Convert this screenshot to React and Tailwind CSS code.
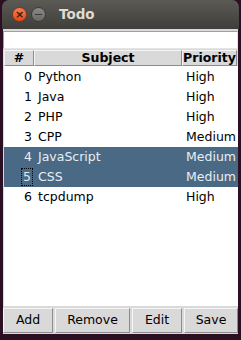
import React from 'react'

const rows = [
  { id: 0, subject: 'Python', priority: 'High' },
  { id: 1, subject: 'Java', priority: 'High' },
  { id: 2, subject: 'PHP', priority: 'High' },
  { id: 3, subject: 'CPP', priority: 'Medium' },
  { id: 4, subject: 'JavaScript', priority: 'Medium', sel: true },
  { id: 5, subject: 'CSS', priority: 'Medium', sel: true, focus: true },
  { id: 6, subject: 'tcpdump', priority: 'High' },
]

function Btn({ children, className }) {
  return (
    <button className={`h-[25px] bg-[#d9d9d9] border border-t-[#f5f5f5] border-l-[#f5f5f5] border-r-[#8c8c8c] border-b-[#8c8c8c] text-[12.5px] text-black ${className}`}>
      {children}
    </button>
  )
}

export default function App() {
  return (
    <div className="w-[241px] h-[340px] bg-[#2c0f22] px-[3px] pb-[6px] flex flex-col" style={{ fontFamily: '"DejaVu Sans", sans-serif' }}>
      <div className="h-[29px] -mx-[1px] rounded-t-[7px] bg-gradient-to-b from-[#5b5a55] to-[#3f3e3a] flex items-center pl-[10px] gap-[4px]">
        <div className="w-[15px] h-[15px] rounded-full bg-gradient-to-b from-[#f37f52] to-[#df4a16] border border-[#8a3314] flex items-center justify-center text-[#3a1a0c] text-[11px] font-bold leading-none">×</div>
        <div className="w-[15px] h-[15px] rounded-full bg-gradient-to-b from-[#8a8985] to-[#6a6965] border border-[#3a3936] flex items-center justify-center">
          <div className="w-[7px] h-[1.5px] bg-[#3a3a38]" />
        </div>
        <div className="ml-[9px] text-[13.5px] font-bold text-[#dfdbd2]">Todo</div>
      </div>
      <div className="flex-1 bg-[#d9d9d9] flex flex-col">
        <div className="h-[2px]" />
        <div className="h-[18px] bg-white border border-[#a0a0a0] border-b-[#e5e5e5] border-r-[#e5e5e5]" />
        <div className="flex-1 bg-white flex flex-col mt-[1px] border-l border-[#d9d9d9]">
          <div className="flex h-[16px] bg-[#d9d9d9] text-[12.5px] font-bold text-black leading-none">
            <div className="w-[30px] flex items-center justify-center border border-t-[#f5f5f5] border-l-[#f5f5f5] border-r-[#8c8c8c] border-b-[#8c8c8c]">#</div>
            <div className="w-[148px] flex items-center justify-center border border-t-[#f5f5f5] border-l-[#f5f5f5] border-r-[#8c8c8c] border-b-[#8c8c8c]">Subject</div>
            <div className="w-[55px] flex items-center justify-center border border-t-[#f5f5f5] border-l-[#f5f5f5] border-r-[#8c8c8c] border-b-[#8c8c8c]">Priority</div>
          </div>
          <div className="flex flex-col pt-[1px]">
            {rows.map((r) => (
              <div key={r.id} className={`flex h-[20px] items-center text-[12.5px] ${r.sel ? 'bg-[#4a6984] text-[#e8eef3]' : 'text-black'}`}>
                <div className="w-[30px] flex justify-end pr-[2px]">
                  <span className={r.focus ? 'outline outline-1 outline-dotted outline-black leading-[16px] px-[1px] text-[#dfe6ec]' : ''}>{r.id}</span>
                </div>
                <div className="w-[148px] pl-[4px]">{r.subject}</div>
                <div className="w-[55px] pl-[4px]">{r.priority}</div>
              </div>
            ))}
          </div>
        </div>
        <div className="flex gap-[2px] pt-[2px] pb-[1px]">
          <Btn className="w-[50px]">Add</Btn>
          <Btn className="w-[75px]">Remove</Btn>
          <Btn className="w-[50px]">Edit</Btn>
          <Btn className="flex-1">Save</Btn>
        </div>
      </div>
    </div>
  )
}
